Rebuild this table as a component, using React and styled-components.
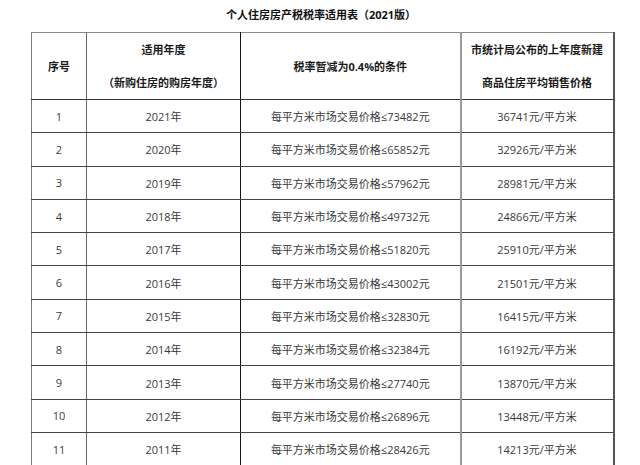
import React from "react";
import styled, { createGlobalStyle } from "styled-components";

const GlobalStyle = createGlobalStyle`
  body {
    margin: 0;
    background: #ffffff;
    font-family: "Open Sans", "Noto Sans CJK SC", sans-serif;
  }
`;

const Page = styled.div`
  width: 640px;
  height: 465px;
  overflow: hidden;
  background: #fff;
`;

const Title = styled.div`
  height: 32px;
  line-height: 30px;
  text-align: center;
  font-size: 11px;
  font-weight: bold;
  color: #111;
  padding-left: 2px;
`;

const Table = styled.table`
  margin-left: 31px;
  width: 583px;
  table-layout: fixed;
  border-collapse: collapse;
  border-top: 1px solid #8a8a8a;
  border-left: 1px solid #7a7a7a;
  border-right: 2px solid #555;
  border-bottom: 1px solid #bbb;
`;

const Col = styled.col`
  width: ${(p) => p.$w}px;
`;

const borders = ["#666", "#111", "#9a9a9a"];

const HeadCell = styled.th`
  padding: 0;
  height: 66px;
  font-size: 11px;
  font-weight: bold;
  color: #1a1a1a;
  line-height: 33px;
  text-align: center;
  vertical-align: middle;
  border-bottom: 1px solid #333;
  border-right: ${(p) => (p.$i === 2 ? "2px" : "1px")} solid
    ${(p) => borders[p.$i] || "#555"};
`;

const Row = styled.tr`
  height: 33.3px;
`;

const Cell = styled.td`
  padding: 0;
  font-size: 11px;
  color: #3a3a3a;
  text-align: center;
  vertical-align: middle;
  border-bottom: 1px solid #444;
  border-right: ${(p) => (p.$i === 2 ? "2px" : "1px")} solid
    ${(p) => borders[p.$i] || "#555"};
  ${Row}:last-child & {
    border-bottom: none;
  }
`;

const rows = [
  [2021, 73482, 36741],
  [2020, 65852, 32926],
  [2019, 57962, 28981],
  [2018, 49732, 24866],
  [2017, 51820, 25910],
  [2016, 43002, 21501],
  [2015, 32830, 16415],
  [2014, 32384, 16192],
  [2013, 27740, 13870],
  [2012, 26896, 13448],
  [2011, 28426, 14213],
];

const App = () => {
  return (
    <Page>
      <GlobalStyle />
      <Title>个人住房房产税税率适用表（2021版）</Title>
      <Table>
        <colgroup>
          <Col $w={55} />
          <Col $w={154} />
          <Col $w={220} />
          <Col $w={153} />
        </colgroup>
        <thead>
          <tr>
            <HeadCell $i={0}>序号</HeadCell>
            <HeadCell $i={1}>
              适用年度
              <br />
              （新购住房的购房年度）
            </HeadCell>
            <HeadCell $i={2}>税率暂减为0.4%的条件</HeadCell>
            <HeadCell $i={3}>
              市统计局公布的上年度新建
              <br />
              商品住房平均销售价格
            </HeadCell>
          </tr>
        </thead>
        <tbody>
          {rows.map(([year, limit, avg], i) => (
            <Row key={year}>
              <Cell $i={0}>{i + 1}</Cell>
              <Cell $i={1}>{year}年</Cell>
              <Cell $i={2}>每平方米市场交易价格≤{limit}元</Cell>
              <Cell $i={3}>{avg}元/平方米</Cell>
            </Row>
          ))}
        </tbody>
      </Table>
    </Page>
  );
};

export default App;
